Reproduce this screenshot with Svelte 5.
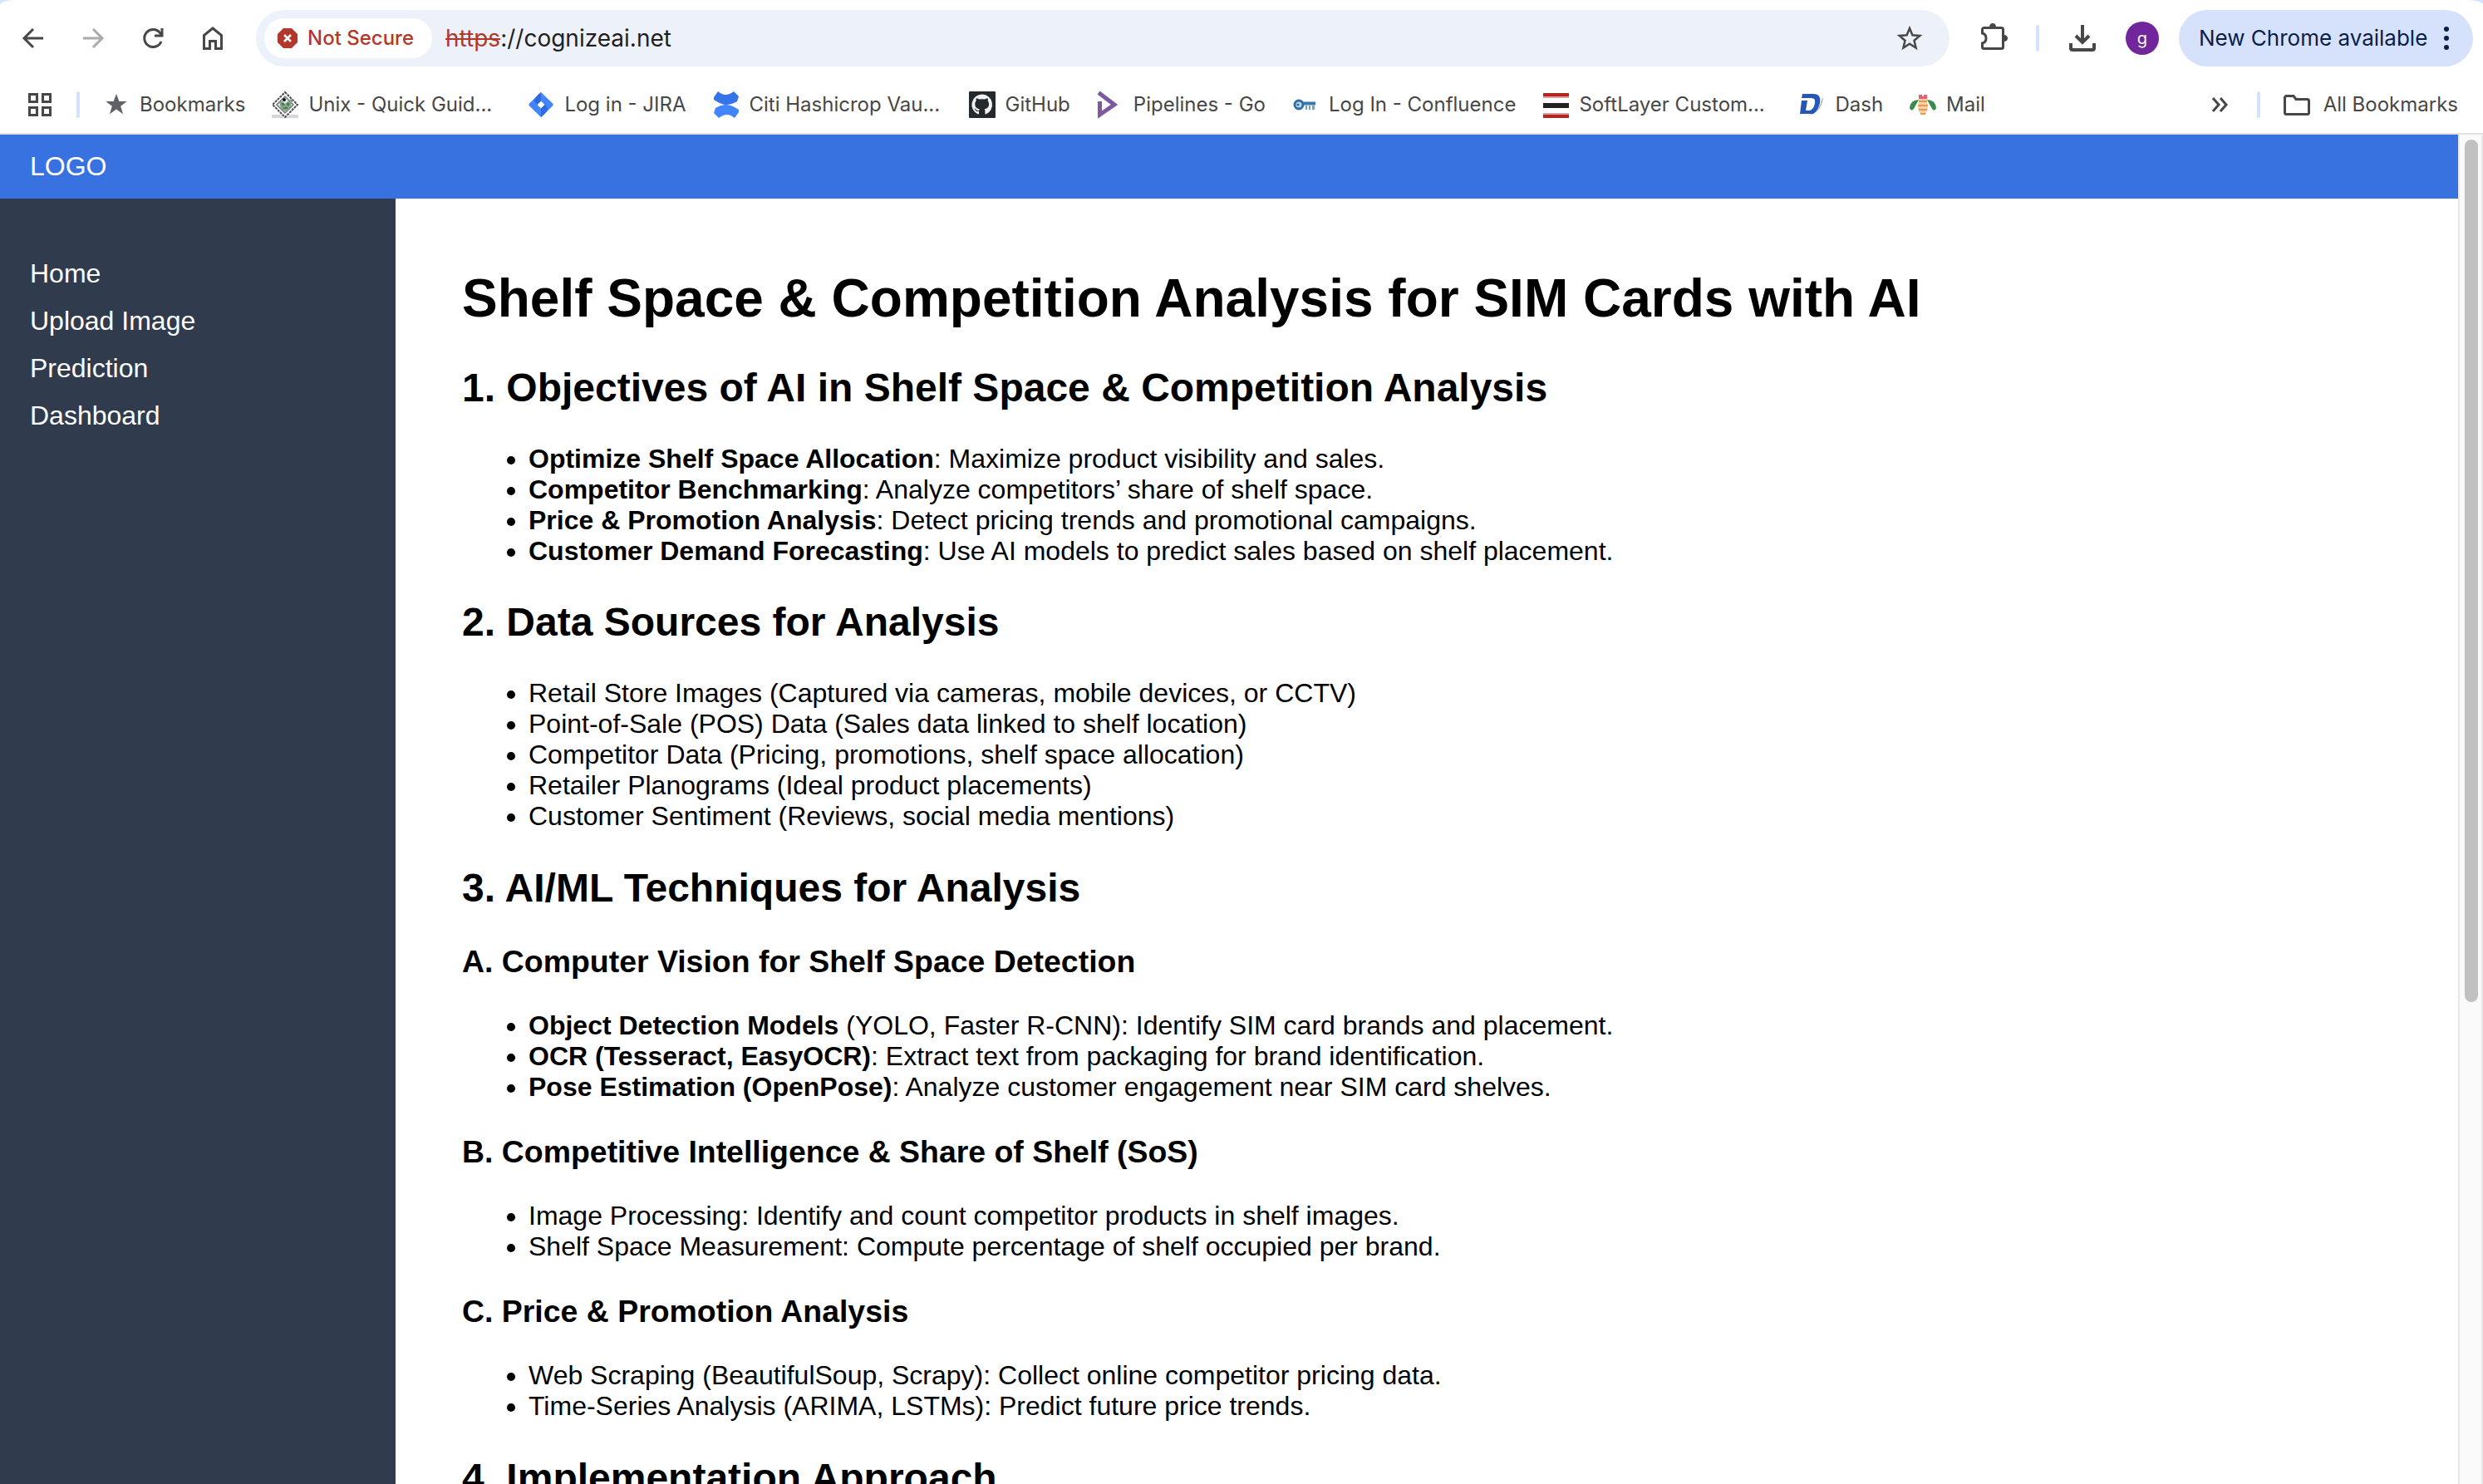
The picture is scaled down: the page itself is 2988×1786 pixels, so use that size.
<script>
  const bookmarks = [
    { icon: 'star', label: 'Bookmarks' },
    { icon: 'unix', label: 'Unix - Quick Guid...', long: true },
    { icon: 'jira', label: 'Log in - JIRA' },
    { icon: 'citi', label: 'Citi Hashicrop Vau...', long: true },
    { icon: 'github', label: 'GitHub' },
    { icon: 'pipelines', label: 'Pipelines - Go' },
    { icon: 'key', label: 'Log In - Confluence' },
    { icon: 'softlayer', label: 'SoftLayer Custom...', long: true },
    { icon: 'dash', label: 'Dash' },
    { icon: 'mail', label: 'Mail' }
  ];

  const links = ['Home', 'Upload Image', 'Prediction', 'Dashboard'];

  const sections = [
    {
      title: '1. Objectives of AI in Shelf Space & Competition Analysis',
      items: [
        ['Optimize Shelf Space Allocation', ': Maximize product visibility and sales.'],
        ['Competitor Benchmarking', ': Analyze competitors’ share of shelf space.'],
        ['Price & Promotion Analysis', ': Detect pricing trends and promotional campaigns.'],
        ['Customer Demand Forecasting', ': Use AI models to predict sales based on shelf placement.']
      ]
    },
    {
      title: '2. Data Sources for Analysis',
      items: [
        ['', 'Retail Store Images (Captured via cameras, mobile devices, or CCTV)'],
        ['', 'Point-of-Sale (POS) Data (Sales data linked to shelf location)'],
        ['', 'Competitor Data (Pricing, promotions, shelf space allocation)'],
        ['', 'Retailer Planograms (Ideal product placements)'],
        ['', 'Customer Sentiment (Reviews, social media mentions)']
      ]
    },
    {
      title: '3. AI/ML Techniques for Analysis',
      groups: [
        {
          title: 'A. Computer Vision for Shelf Space Detection',
          items: [
            ['Object Detection Models', ' (YOLO, Faster R-CNN): Identify SIM card brands and placement.'],
            ['OCR (Tesseract, EasyOCR)', ': Extract text from packaging for brand identification.'],
            ['Pose Estimation (OpenPose)', ': Analyze customer engagement near SIM card shelves.']
          ]
        },
        {
          title: 'B. Competitive Intelligence & Share of Shelf (SoS)',
          items: [
            ['', 'Image Processing: Identify and count competitor products in shelf images.'],
            ['', 'Shelf Space Measurement: Compute percentage of shelf occupied per brand.']
          ]
        },
        {
          title: 'C. Price & Promotion Analysis',
          items: [
            ['', 'Web Scraping (BeautifulSoup, Scrapy): Collect online competitor pricing data.'],
            ['', 'Time-Series Analysis (ARIMA, LSTMs): Predict future price trends.']
          ]
        }
      ]
    },
    { title: '4. Implementation Approach' }
  ];
</script>

{#snippet bulletList(items)}
  <ul>
    {#each items as [lead, rest]}
      <li>{#if lead}<strong>{lead}</strong>{/if}{rest}</li>
    {/each}
  </ul>
{/snippet}

{#snippet favicon(name)}
  <svg class="icon" viewBox="0 0 32 32" aria-hidden="true">
    {#if name === 'star'}
      <path fill="#5f6368" d="M16 3l3.400 9h9.300l-7.500 5.800 2.800 9.400L16 21.600l-8 5.600 2.800-9.400L3.300 12h9.300z" />
    {:else if name === 'unix'}
      <path fill="#d6d6d6" d="M0 28h10l6 4 6-4h10v4H0z" />
      <path fill="#fff" stroke="#4c4c4c" stroke-width="2" stroke-dasharray="3 1" d="M16 1l15 15-15 15L1 16z" />
      <path fill="#e4e9e4" stroke="#777" stroke-width="1.500" d="M16 6l10 10-10 10L6 16z" />
      <path fill="#7fa487" d="M9 12h4l3 3 7-6 2 2-3 9-6 4-5-3z" />
      <path fill="#4f7a5b" d="M12 14h3v3h-3zM18 14h3v3h-3zM14 19h5v2h-5z" />
      <circle cx="15" cy="10" r="2" fill="#111" />
    {:else if name === 'jira'}
      <path fill="#4285ff" fill-rule="evenodd" d="M16 1l14 13.500q1.500 1.500 0 3L16 31 2 17.500q-1.500-1.500 0-3zM16 11.500l-4.500 4.500 4.500 4.500 4.500-4.500z" />
      <path fill="#2f6ae0" d="M16 1v10.500l-4.500 4.500-3.500-4q-1-4 8-11zM16 31V20.500l4.500-4.500 3.500 4q1 4-8 11z" />
    {:else if name === 'citi'}
      <path fill="#3573e8" d="M1 7l5-7q5 4 9 4 5 0 10-4l6 6-2 6q-7 4-13 4T1 10z" />
      <path fill="#4285ff" d="M31 25l-5 7q-5-4-9-4-5 0-10 4l-6-6 2-6q7-4 13-4t15 6z" />
    {:else if name === 'github'}
      <rect width="32" height="32" rx="1" fill="#24292e" />
      <path fill="#f2f2f2" d="M16 3.500a12.500 12.500 0 0 0-5 24c.8.1 1-.3 1-.9v-2.700c-3.500.8-4.200-1.500-4.200-1.500-.7-1.500-1.500-2-1.500-2 1.300-.2 2 1 2.500 1.700 1 1.500 2.500 1.200 3.200.9l.8-1.700c-3-.5-5.500-2-5.500-6 0-1.700.6-2.700 1.400-3.700-.3-1.200-.2-2.500.2-3.400 1 0 2.300.6 3.400 1.400a13 13 0 0 1 6.800 0c1.100-.8 2.400-1.400 3.400-1.400.4.900.5 2.200.2 3.400.8 1 1.400 2 1.400 3.700 0 4-2.500 5.500-5.500 6 .5.500.8 1.300.8 2.400v3c0 .6.300 1 1 .8a12.500 12.500 0 0 0-4.400-24z" />
    {:else if name === 'pipelines'}
      <path fill="none" stroke="#7d5a9e" stroke-width="5" d="M2 1.500L21 16 3.500 28V12" />
    {:else if name === 'key'}
      <path fill="none" stroke="#3b78ad" stroke-width="4" d="M13 14.500h15" />
      <path fill="#6ea3cf" d="M16 17h2v5h-2zM20 17h2v5h-2zM24 17h3v5h-3z" />
      <circle cx="8" cy="16" r="5" fill="#b9d8ee" stroke="#2f6da3" stroke-width="3" />
      <circle cx="7" cy="16" r="1.500" fill="#2f6da3" />
    {:else if name === 'softlayer'}
      <path fill="#b3261e" d="M1 2h31v4H1zM1 28h31v4H1z" />
      <path fill="#dba09d" d="M1 6h31v2H1zM1 26h31v2H1z" />
      <path fill="#222" d="M1 14h31v6H1z" />
    {:else if name === 'dash'}
      <path fill="#b5b9bf" d="M2 30q22 0 26-20l2-4q-1 24-28 24z" />
      <path fill="#2457b8" fill-rule="evenodd" d="M5 3h13q10 0 8 11-2 9-8 13H2l2-16h7L9 23h5q5-2 6-9 1-6-4-6H4z" />
    {:else if name === 'mail'}
      <path fill="#3c8a4e" d="M11 10Q1 10 0 20q2 5 5 1zM21 10q10 0 11 10-2 5-5 1z" />
      <path fill="#ef5b7a" d="M11 4h4v2h2V4h4v5H11z" />
      <path fill="#f6d3a8" d="M11 9h10l1 12-3 7h-6l-3-7z" />
      <path fill="#e59a4c" d="M11 11h10v2H11zM10 16h12v2H10zM11 21h10v2H11zM13 26h6v2h-6z" />
    {/if}
  </svg>
{/snippet}

<div class="window">
  <div class="chrome">
    <div class="toolbar">
      <nav class="history" aria-label="Browser">
        <button aria-label="Back">
          <svg class="icon" viewBox="0 0 32 32"><path class="line" d="M28 16H6M16 5L5 16l11 11" /></svg>
        </button>
        <button aria-label="Forward" disabled>
          <svg class="icon" viewBox="0 0 32 32"><path class="line" d="M4 16h22M16 5l11 11-11 11" /></svg>
        </button>
        <button aria-label="Reload">
          <svg class="icon" viewBox="0 0 32 32">
            <path class="line" d="M26 20a10.500 10.500 0 1 1-1.500-10.500L27 13" />
            <path class="line" d="M27 4v9h-9" />
          </svg>
        </button>
        <button aria-label="Home page">
          <svg class="icon" viewBox="0 0 32 32"><path class="line" d="M5.500 28.500V12.500L16 4l10.500 8.500v16h-7v-9h-7v9z" /></svg>
        </button>
      </nav>

      <div class="omnibox">
        <button class="chip">
          <svg viewBox="0 0 24 24" aria-hidden="true">
            <path fill="#b3382c" d="M7 0h10l7 7v10l-7 7H7l-7-7V7z" />
            <path fill="none" stroke="#fff" stroke-width="2.500" d="M8 8l8 8M16 8l-8 8" />
          </svg>
          Not Secure
        </button>
        <label class="url">
          <s>https</s><input aria-label="Address" value="://cognizeai.net" />
        </label>
        <button aria-label="Bookmark this page">
          <svg class="icon" viewBox="0 0 32 32"><path class="line thin" d="M16 4l3.400 8.300 8.900.7-6.800 5.800 2.100 8.700-7.600-4.700-7.600 4.700 2.100-8.700L3.700 13l8.900-.7z" /></svg>
        </button>
      </div>

      <div class="actions">
        <button aria-label="Extensions">
          <svg class="icon" viewBox="0 0 32 32">
            <path class="line" d="M5.500 3.500h21a2 2 0 0 1 2 2v21a2 2 0 0 1-2 2h-21a2 2 0 0 1-2-2V22q4.500-1 4.500-6t-4.500-6V5.500a2 2 0 0 1 2-2z" />
            <path fill="#474747" d="M12 3q0-5 4-5t4 5zM29 12q5 0 5 4t-5 4z" />
          </svg>
        </button>
        <span class="divider"></span>
        <button aria-label="Downloads">
          <svg class="icon" viewBox="0 0 32 32">
            <path class="line bold" d="M16 0v21M8 13l8 8 8-8M2 22v6q0 2 2 2h24q2 0 2-2v-6" />
          </svg>
        </button>
        <button class="avatar" aria-label="Profile">g</button>
      </div>

      <button class="update">
        New Chrome available
        <svg viewBox="0 0 8 30" aria-hidden="true">
          <circle cx="4" cy="4" r="3" /><circle cx="4" cy="15" r="3" /><circle cx="4" cy="26" r="3" />
        </svg>
      </button>
    </div>

    <nav class="bookmarks" aria-label="Bookmarks bar">
      <button aria-label="Tab groups">
        <svg class="icon" viewBox="0 0 32 32"><path class="line" d="M3.500 3.500h9v9h-9zM19.500 3.500h9v9h-9zM3.500 19.500h9v9h-9zM19.500 19.500h9v9h-9z" /></svg>
      </button>
      <span class="divider"></span>
      <div class="marks">
        {#each bookmarks as mark}
          <a href="#{mark.icon}">
            {@render favicon(mark.icon)}
            <span class:long={mark.long}>{mark.label}</span>
          </a>
        {/each}
      </div>
      <button aria-label="More bookmarks">
        <svg class="icon" viewBox="0 0 32 32"><path class="line" d="M7 8l7 8-7 8M16 8l7 8-7 8" /></svg>
      </button>
      <span class="divider"></span>
      <a class="all" href="#all">
        <svg class="icon" viewBox="0 0 32 32" aria-hidden="true">
          <path class="line" d="M1.500 7.500a2 2 0 0 1 2-2H12l3 4h13.500a2 2 0 0 1 2 2v14a2 2 0 0 1-2 2h-25a2 2 0 0 1-2-2z" />
        </svg>
        <span>All Bookmarks</span>
      </a>
    </nav>
  </div>

  <div class="viewport">
    <div class="page">
      <header>LOGO</header>
      <div class="body">
        <aside>
          <ul class="menu">
            {#each links as link}
              <li><a href="#{link}">{link}</a></li>
            {/each}
          </ul>
        </aside>
        <main>
          <h1>Shelf Space &amp; Competition Analysis for SIM Cards with AI</h1>
          {#each sections as section}
            <h2>{section.title}</h2>
            {#if section.items}{@render bulletList(section.items)}{/if}
            {#each section.groups ?? [] as group}
              <h3>{group.title}</h3>
              {@render bulletList(group.items)}
            {/each}
          {/each}
        </main>
      </div>
    </div>
    <div class="scrollbar"><div class="thumb"></div></div>
  </div>
</div>

<style>
  :global(body) {
    margin: 0;
    overflow: hidden;
  }

  .window {
    display: flex;
    flex-direction: column;
    height: 100vh;
    background: #d3e3fd;
  }

  button {
    display: flex;
    align-items: center;
    padding: 0;
    border: 0;
    background: none;
    color: inherit;
    font: inherit;
  }

  .icon {
    display: block;
    flex: none;
    width: 32px;
    height: 32px;
    overflow: visible;
  }

  .line {
    fill: none;
    stroke: #474747;
    stroke-width: 3;
  }

  .thin {
    stroke-width: 2.5;
  }

  .bold {
    stroke-width: 4;
  }

  button:disabled {
    opacity: 0.45;
  }

  .divider {
    width: 4px;
    height: 32px;
    border-radius: 2px;
    background: #d3e3fd;
  }

  /* Browser frame */
  .chrome {
    flex: none;
    border-bottom: 2px solid #e1e3e1;
    border-radius: 18px 18px 0 0 / 6px 6px 0 0;
    background: #fff;
    color: #474747;
    font: 24px/32px Inter, sans-serif;
    white-space: nowrap;
  }

  .toolbar {
    display: flex;
    align-items: center;
    height: 92px;
    padding: 0 12px 0 24px;
  }

  .history {
    display: flex;
    gap: 40px;
    margin-right: 36px;
  }

  .omnibox {
    display: flex;
    flex: 1;
    align-items: center;
    height: 68px;
    padding: 0 32px 0 10px;
    border-radius: 34px;
    background: #edf2fa;
  }

  .chip {
    gap: 12px;
    height: 48px;
    padding: 0 22px 0 16px;
    border-radius: 24px;
    background: #fff;
    color: #b3382c;
    font-weight: 500;
  }

  .chip svg {
    width: 24px;
    height: 24px;
  }

  .url {
    display: flex;
    flex: 1;
    align-items: center;
    margin-left: 16px;
    font-size: 28px;
  }

  .url s {
    color: #b3382c;
  }

  .url input {
    flex: 1;
    padding: 0;
    border: 0;
    outline: 0;
    background: none;
    color: #1f1f1f;
    font: inherit;
  }

  .actions {
    display: flex;
    align-items: center;
    gap: 36px;
    margin: 0 24px 0 36px;
  }

  .avatar {
    justify-content: center;
    width: 40px;
    height: 40px;
    border-radius: 50%;
    background: #71269c;
    color: #fff;
    font-size: 20px;
  }

  .update {
    justify-content: space-between;
    min-width: 354px;
    height: 68px;
    padding: 0 28px 0 24px;
    border-radius: 34px;
    background: #d6e2fb;
    color: #0b1d48;
    font-size: 26px;
  }

  .update svg {
    width: 8px;
    height: 30px;
    fill: #0b1d48;
  }

  .bookmarks {
    display: flex;
    align-items: center;
    gap: 28px;
    height: 68px;
    padding: 0 30px 0 32px;
  }

  .marks {
    display: flex;
    flex: 1;
    gap: 32px;
  }

  .bookmarks a {
    display: flex;
    align-items: center;
    gap: 12px;
    color: inherit;
    text-decoration: none;
  }

  .bookmarks .all {
    gap: 16px;
  }

  .long {
    width: 232px;
  }

  /* Web page */
  .viewport {
    display: flex;
    flex: 1;
    min-height: 0;
    background: #fff;
    color: #000;
    font: 32px/37px "Liberation Sans", Arial, sans-serif;
  }

  .page {
    display: flex;
    flex: 1;
    flex-direction: column;
    min-width: 0;
    overflow: hidden;
  }

  header {
    flex: none;
    padding: 20px 36px;
    background: #3871e0;
    color: #fff;
  }

  .body {
    display: flex;
    flex: 1;
    min-height: 0;
  }

  aside {
    flex: none;
    box-sizing: border-box;
    width: 476px;
    padding: 40px 36px;
    background: #303c4d;
  }

  .menu {
    display: grid;
    gap: 20px;
    padding: 0;
    list-style: none;
  }

  .menu a {
    color: #fff;
    text-decoration: none;
  }

  main {
    flex: 1;
    padding: 40px 80px;
  }

  /* Headings keep the browser's own sizes and margins */
  h1 {
    font-size: 64px;
    line-height: 74px;
  }

  h2 {
    line-height: 55px;
  }

  h3 {
    line-height: 43px;
  }

  ul {
    margin: 32px 0;
    padding-left: 80px;
  }

  .scrollbar {
    flex: none;
    box-sizing: border-box;
    width: 30px;
    padding: 6px 4px 6px 6px;
    border: solid #e8e8e8;
    border-width: 0 2px;
    background: #fafafa;
  }

  .thumb {
    height: 64.4%;
    border-radius: 8px;
    background: #c1c1c1;
  }
</style>
